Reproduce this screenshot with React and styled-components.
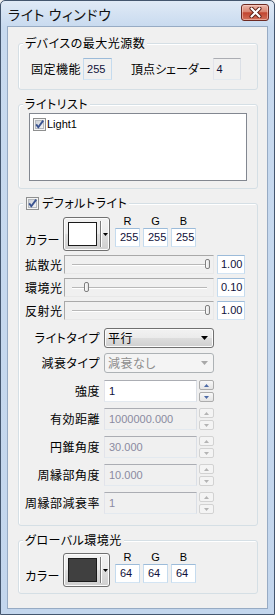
import React from 'react'
import styled, { createGlobalStyle } from 'styled-components'

const GlobalStyle = createGlobalStyle`
  html, body {
    margin: 0;
    padding: 0;
    background: #f0f0f0;
  }
  body {
    font-family: "Noto Sans CJK JP", "Noto Sans", sans-serif;
    font-size: 12px;
    font-feature-settings: "palt";
    letter-spacing: 0.5px;
    color: #000;
  }
`

const Window = styled.div`
  box-sizing: border-box;
  width: 275px;
  height: 615px;
  border: 1px solid #44566e;
  border-radius: 5px 5px 0 0;
  background: linear-gradient(#e0eaf6, #c8daef 26px, #c3d6ed);
  display: flex;
  flex-direction: column;
  padding: 0 6px 5px;
`

const TitleBar = styled.div`
  height: 25px;
  display: flex;
  align-items: flex-start;
  justify-content: space-between;
  padding-left: 1px;
`

const Title = styled.span`
  font-size: 14px;
  line-height: 16px;
  margin-top: 5px;
  letter-spacing: 0.6px;
  color: #111;
`

const CloseButton = styled.div`
  box-sizing: border-box;
  width: 28px;
  height: 17px;
  margin: 3px -1px 0 0;
  border: 1px solid #6e2a22;
  border-radius: 3px;
  background: linear-gradient(#ecb6aa, #d98571 45%, #c2452f 52%, #d2705a);
  box-shadow: inset 0 0 0 1px rgba(255, 220, 210, 0.5);
  display: flex;
  align-items: center;
  justify-content: center;
`

const Client = styled.div`
  flex: 1;
  background: #f0f0f0;
  border: 1px solid #97abc4;
  padding: 16px 9px 0 10px;
  display: flex;
  flex-direction: column;
  gap: 14px;
`

const Group = styled.div`
  border: 1px solid #d5dfe5;
  border-radius: 3px;
  box-shadow: inset 1px 1px 0 #fff;
  display: flex;
  flex-direction: column;
  padding-bottom: ${p => p.$pb}px;
`

const GroupTitle = styled.div`
  align-self: flex-start;
  margin: -8px 0 0 4px;
  padding: 0 2px 0 ${p => (p.$check ? 3 : 2)}px;
  background: #f0f0f0;
  height: 14px;
  line-height: 14px;
  display: flex;
  align-items: center;
  gap: 3px;
`

const Row = styled.div`
  display: flex;
  align-items: ${p => p.$align || 'center'};
  margin-top: ${p => p.$mt || 0}px;
  padding-left: ${p => p.$pl || 0}px;
`

const Label = styled.span`
  line-height: 14px;
  margin-left: ${p => p.$ml || 0}px;
  letter-spacing: ${p => (p.$tight ? 0 : 0.5)}px;
  white-space: nowrap;
`

const TextBox = styled.div`
  box-sizing: border-box;
  width: ${p => p.$w}px;
  height: ${p => p.$h}px;
  margin-left: ${p => p.$ml || 0}px;
  border: 1px solid;
  border-color: ${p => p.$focus ? '#9cbbd9 #c5dbee #d3e4f3 #c5dbee' : '#abadb3 #dbdfe6 #e3e9ef #e2e3ea'};
  background: ${p => (p.$disabled || p.$readonly ? '#f0f0f0' : '#fff')};
  color: ${p => (p.$disabled ? '#8a8aa0' : '#10103a')};
  font-family: "Liberation Sans", sans-serif;
  font-size: 11px;
  letter-spacing: 0;
  line-height: ${p => p.$h - 2}px;
  padding-left: ${p => p.$pad ?? 3}px;
  white-space: nowrap;
  overflow: hidden;
`

const ListBox = styled.div`
  box-sizing: border-box;
  height: 68px;
  margin: 2px 10px 0 10px;
  border: 1px solid #828790;
  background: #fff;
  padding: 4px 0 0 3px;
`

const ListItem = styled.div`
  display: flex;
  align-items: center;
  gap: 1px;
  font-family: "Liberation Sans", sans-serif;
  font-size: 11px;
  letter-spacing: 0;
  line-height: 13px;
`

const ColorLabel = styled.span`
  box-sizing: border-box;
  width: 44px;
  padding-right: 3px;
  text-align: right;
  margin-top: 18px;
  line-height: 14px;
`

const buttonFace = `
  border: 1px solid #707070;
  border-radius: 3px;
  background: linear-gradient(#f2f2f2 0%, #ebebeb 48%, #dddddd 52%, #cfcfcf 100%);
  box-shadow: inset 0 0 0 1px #fcfcfc;
`

const ColorButton = styled.div`
  box-sizing: border-box;
  width: 47px;
  height: 34px;
  margin-top: 2px;
  ${buttonFace}
  display: flex;
  align-items: center;
  padding-left: 4px;
`

const Swatch = styled.div`
  box-sizing: border-box;
  width: 29px;
  height: 24px;
  border: 1px solid #1b1b1b;
  background: ${p => p.$color};
`

const Separator = styled.div`
  width: 1px;
  height: 26px;
  margin: 0 2px 0 3px;
  background: #7c7c7c;
  box-shadow: 1px 0 0 #fff;
`

const Channels = styled.div`
  display: flex;
  gap: 3px;
  margin-left: 5px;
`

const Channel = styled.div`
  display: flex;
  flex-direction: column;
  align-items: center;
`

const ChannelLabel = styled.span`
  height: 13px;
  line-height: 13px;
  font-family: "Liberation Sans", sans-serif;
  font-size: 11px;
  letter-spacing: 0;
`

const SliderLabel = styled.span`
  box-sizing: border-box;
  width: 45px;
  padding-left: 6px;
  line-height: 14px;
`

const SliderBox = styled.div`
  box-sizing: border-box;
  width: 150px;
  height: 19px;
  border: 1px solid;
  border-color: #a9a9a9 #e8e8e8 #e8e8e8 #a9a9a9;
  padding: 0 6px 0 7px;
  display: flex;
  align-items: center;
`

const Track = styled.div`
  position: relative;
  flex: 1;
  height: 1px;
  background: #b8b8b8;
  box-shadow: 0 1px 0 #fff;
`

const Thumb = styled.div`
  position: absolute;
  top: -5px;
  width: 5px;
  height: 10px;
  margin-left: -2px;
  box-sizing: border-box;
  border: 1px solid #7f7f7f;
  border-radius: 2px;
  background: linear-gradient(90deg, #fdfdfd, #e2e2e2);
`

const FormLabel = styled.span`
  box-sizing: border-box;
  width: 85px;
  padding-right: 4px;
  text-align: right;
  line-height: 14px;
  white-space: nowrap;
`

const Select = styled.div`
  box-sizing: border-box;
  width: 110px;
  height: 20px;
  border-radius: 3px;
  display: flex;
  align-items: center;
  justify-content: space-between;
  padding: 0 5px 0 3px;
  line-height: 14px;
  ${p => p.$disabled
    ? 'border: 1px solid #adb2b5; background: #f4f4f4; color: #8d8d8d;'
    : buttonFace}
`

const Spin = styled.div`
  display: flex;
  flex-direction: column;
  gap: 2px;
  margin-left: 2px;
`

const SpinButton = styled.div`
  box-sizing: border-box;
  width: 15px;
  height: 10px;
  border: 1px solid ${p => (p.$disabled ? '#d2d2d2' : '#acacac')};
  border-radius: 2px;
  background: ${p => (p.$disabled ? '#f4f4f4' : 'linear-gradient(#f8f8f8, #e4e4e4)')};
  display: flex;
  align-items: center;
  justify-content: center;
`

const CheckBox = () => (
  <svg width="13" height="13" viewBox="0 0 13 13">
    <defs>
      <linearGradient id="cbg" x1="0" y1="0" x2="1" y2="1">
        <stop offset="0" stopColor="#cbcfd5" />
        <stop offset="1" stopColor="#f6f6f6" />
      </linearGradient>
    </defs>
    <rect x="0.5" y="0.5" width="12" height="12" fill="#f4f4f4" stroke="#8e8f8f" />
    <rect x="2.5" y="2.5" width="8" height="8" fill="url(#cbg)" stroke="#b5b9be" />
    <path d="M3.2 6.4 L5.3 9.2 L10.2 2.6" fill="none" stroke="#3a5390" strokeWidth="1.9" />
  </svg>
)

const DownArrow = ({ w = 7, h = 4, color = '#000' }) => (
  <svg width={w} height={h} viewBox={`0 0 ${w} ${h}`}>
    <path d={`M0 0 H${w} L${w / 2} ${h} Z`} fill={color} />
  </svg>
)

const SpinArrow = ({ up, disabled }) => (
  <svg width="5" height="3" viewBox="0 0 5 3">
    <path d={up ? 'M0 3 L2.5 0 L5 3 Z' : 'M0 0 H5 L2.5 3 Z'} fill={disabled ? '#b4b4b4' : '#4d6aa6'} />
  </svg>
)

const ColorPicker = ({ color, value }) => (
  <>
    <ColorLabel>カラー</ColorLabel>
    <ColorButton>
      <Swatch $color={color} />
      <Separator />
      <DownArrow w={5} h={3} />
    </ColorButton>
    <Channels>
      {['R', 'G', 'B'].map(c => (
        <Channel key={c}>
          <ChannelLabel>{c}</ChannelLabel>
          <TextBox $w={25} $h={19} $pad={4} $focus>{value}</TextBox>
        </Channel>
      ))}
    </Channels>
  </>
)

const sliders = [
  { label: '拡散光', value: 1.0 },
  { label: '環境光', value: 0.1 },
  { label: '反射光', value: 1.0 },
]

const spinFields = [
  { label: '強度', value: '1', disabled: false },
  { label: '有効距離', value: '1000000.000', disabled: true },
  { label: '円錐角度', value: '30.000', disabled: true },
  { label: '周縁部角度', value: '10.000', disabled: true },
  { label: '周縁部減衰率', value: '1', disabled: true },
]

export default function App() {
  return (
    <>
      <GlobalStyle />
      <Window>
        <TitleBar>
          <Title>ライト ウィンドウ</Title>
          <CloseButton>
            <svg width="13" height="11" viewBox="0 0 13 11">
              <path d="M2.5 1.5 L10.5 9.5 M10.5 1.5 L2.5 9.5" stroke="#5a1c14" strokeWidth="4" strokeLinecap="round" />
              <path d="M2.5 1.5 L10.5 9.5 M10.5 1.5 L2.5 9.5" stroke="#fff" strokeWidth="2.2" strokeLinecap="round" />
            </svg>
          </CloseButton>
        </TitleBar>

        <Client>
          <Group $pb={9}>
            <GroupTitle>デバイスの最大光源数</GroupTitle>
            <Row $mt={8} $pl={12}>
              <Label>固定機能</Label>
              <TextBox $w={29} $h={22} $ml={2} $readonly $focus>255</TextBox>
              <Label $ml={19} $tight>頂点シェーダー</Label>
              <TextBox $w={28} $h={22} $ml={2} $readonly>4</TextBox>
            </Row>
          </Group>

          <Group $pb={7}>
            <GroupTitle>ライトリスト</GroupTitle>
            <ListBox>
              <ListItem>
                <CheckBox />
                <span>Light1</span>
              </ListItem>
            </ListBox>
          </Group>

          <Group $pb={11}>
            <GroupTitle $check>
              <CheckBox />
              <span>デフォルトライト</span>
            </GroupTitle>
            <Row $mt={5} $align="flex-start">
              <ColorPicker color="#fff" value="255" />
            </Row>
            {sliders.map(s => (
              <Row key={s.label} $mt={4}>
                <SliderLabel>{s.label}</SliderLabel>
                <SliderBox>
                  <Track>
                    <Thumb style={{ left: `${s.value * 100}%` }} />
                  </Track>
                </SliderBox>
                <TextBox $w={28} $h={19} $ml={3} $focus>{s.value.toFixed(2)}</TextBox>
              </Row>
            ))}
            <Row $mt={8}>
              <FormLabel>ライトタイプ</FormLabel>
              <Select>
                <span>平行</span>
                <DownArrow />
              </Select>
            </Row>
            <Row $mt={5}>
              <FormLabel>減衰タイプ</FormLabel>
              <Select $disabled>
                <span>減衰なし</span>
                <DownArrow color="#a8a8a8" />
              </Select>
            </Row>
            {spinFields.map((f, i) => (
              <Row key={f.label} $mt={i === 0 ? 7 : 6}>
                <FormLabel>{f.label}</FormLabel>
                <TextBox $w={93} $h={22} $pad={4} $disabled={f.disabled}>{f.value}</TextBox>
                <Spin>
                  <SpinButton $disabled={f.disabled}><SpinArrow up disabled={f.disabled} /></SpinButton>
                  <SpinButton $disabled={f.disabled}><SpinArrow disabled={f.disabled} /></SpinButton>
                </Spin>
              </Row>
            ))}
          </Group>

          <Group $pb={6}>
            <GroupTitle>グローバル環境光</GroupTitle>
            <Row $mt={4} $align="flex-start">
              <ColorPicker color="#404040" value="64" />
            </Row>
          </Group>
        </Client>
      </Window>
    </>
  )
}
